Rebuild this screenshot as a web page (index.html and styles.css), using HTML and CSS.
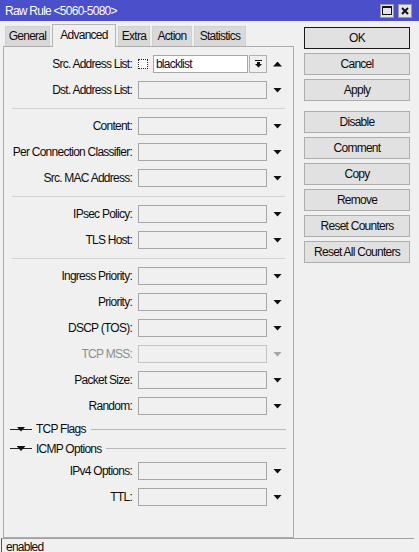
FILE: index.html
```html
<!DOCTYPE html>
<html lang="en">
<head>
    <meta charset="UTF-8">
    <title>Raw Rule &lt;5060-5080&gt;</title>
    <link rel="stylesheet" href="styles.css">
</head>
<body>
    <div class="titlebar">
        <span class="title">Raw Rule &lt;5060-5080&gt;</span>
        <div class="win-btns">
            <span class="win-btn"><span class="max-icon"></span></span>
            <span class="win-btn">
                <svg width="8" height="8" viewBox="0 0 8 8"><path d="M1 1L7 7M7 1L1 7" stroke="#111" stroke-width="2"/></svg>
            </span>
        </div>
    </div>

    <div class="main">
        <div class="left">
            <div class="tabs">
                <span class="tab tab-general">General</span>
                <span class="tab tab-advanced active">Advanced</span>
                <span class="tab tab-extra">Extra</span>
                <span class="tab tab-action">Action</span>
                <span class="tab tab-stats">Statistics</span>
            </div>

            <div class="panel">
                <div class="row">
                    <label>Src. Address List:</label>
                    <div class="combo">
                        <span class="check"></span>
                        <span class="text-input">blacklist</span>
                        <span class="drop-btn">
                            <svg width="7" height="8" viewBox="0 0 7 8"><rect x="0" y="0" width="7" height="1" fill="#111"/><rect x="2" y="2" width="3" height="2" fill="#111"/><path d="M0 4H7L3.5 7.5Z" fill="#111"/></svg>
                        </span>
                    </div>
                    <span class="arrow up"></span>
                </div>
                <div class="row">
                    <label>Dst. Address List:</label>
                    <span class="field"></span>
                    <span class="arrow"></span>
                </div>

                <div class="sep"></div>

                <div class="row">
                    <label>Content:</label>
                    <span class="field"></span>
                    <span class="arrow"></span>
                </div>
                <div class="row">
                    <label>Per Connection Classifier:</label>
                    <span class="field"></span>
                    <span class="arrow"></span>
                </div>
                <div class="row">
                    <label>Src. MAC Address:</label>
                    <span class="field"></span>
                    <span class="arrow"></span>
                </div>

                <div class="sep"></div>

                <div class="row">
                    <label>IPsec Policy:</label>
                    <span class="field"></span>
                    <span class="arrow"></span>
                </div>
                <div class="row">
                    <label>TLS Host:</label>
                    <span class="field"></span>
                    <span class="arrow"></span>
                </div>

                <div class="sep"></div>

                <div class="row">
                    <label>Ingress Priority:</label>
                    <span class="field"></span>
                    <span class="arrow"></span>
                </div>
                <div class="row">
                    <label>Priority:</label>
                    <span class="field"></span>
                    <span class="arrow"></span>
                </div>
                <div class="row">
                    <label>DSCP (TOS):</label>
                    <span class="field"></span>
                    <span class="arrow"></span>
                </div>
                <div class="row disabled">
                    <label>TCP MSS:</label>
                    <span class="field"></span>
                    <span class="arrow"></span>
                </div>
                <div class="row">
                    <label>Packet Size:</label>
                    <span class="field"></span>
                    <span class="arrow"></span>
                </div>
                <div class="row">
                    <label>Random:</label>
                    <span class="field"></span>
                    <span class="arrow"></span>
                </div>

                <div class="group group-tcp">
                    <span class="group-toggle"><span class="arrow"></span></span>
                    <span class="group-name">TCP Flags</span>
                    <span class="group-line"></span>
                </div>
                <div class="group">
                    <span class="group-toggle"><span class="arrow"></span></span>
                    <span class="group-name">ICMP Options</span>
                    <span class="group-line"></span>
                </div>

                <div class="row">
                    <label>IPv4 Options:</label>
                    <span class="field"></span>
                    <span class="arrow"></span>
                </div>
                <div class="row">
                    <label>TTL:</label>
                    <span class="field"></span>
                    <span class="arrow"></span>
                </div>
            </div>
        </div>

        <div class="buttons">
            <button class="btn default">OK</button>
            <button class="btn">Cancel</button>
            <button class="btn">Apply</button>
            <button class="btn btn-gap">Disable</button>
            <button class="btn">Comment</button>
            <button class="btn">Copy</button>
            <button class="btn">Remove</button>
            <button class="btn">Reset Counters</button>
            <button class="btn">Reset All Counters</button>
        </div>
    </div>

    <div class="statusbar">enabled</div>
</body>
</html>
```

FILE: styles.css
```css
* {
    margin: 0;
    padding: 0;
    box-sizing: border-box;
}

body {
    width: 419px;
    height: 552px;
    overflow: hidden;
    font-family: 'Liberation Sans', Arial, sans-serif;
    font-size: 12px;
    letter-spacing: -0.75px;
    color: #0d0d0d;
    background: #f0f0f0;
}

/* title bar */

.titlebar {
    height: 21px;
    background: #4b4fca;
    display: flex;
    align-items: center;
    justify-content: space-between;
    padding: 0 7px 0 5px;
}

.title {
    color: #fff;
    font-size: 12px;
}

.win-btns {
    display: flex;
    gap: 4px;
}

.win-btn {
    width: 14px;
    height: 14px;
    background: #e4e4e4;
    border: 1px solid #9a9a9a;
    display: flex;
    align-items: center;
    justify-content: center;
}

.max-icon {
    width: 10px;
    height: 9px;
    border: 1px solid #111;
    border-top-width: 2px;
}

/* layout */

.main {
    display: flex;
    height: 517px;
    padding-left: 3px;
}

.left {
    width: 291px;
    display: flex;
    flex-direction: column;
}

/* tabs */

.tabs {
    height: 25px;
    display: flex;
    align-items: flex-end;
    gap: 2px;
    padding-left: 2px;
}

.tab {
    height: 20px;
    line-height: 19px;
    text-align: center;
    background: #d9d9d9;
    border: 1px solid #d0d0d0;
    border-bottom: none;
}

.tab.active {
    position: relative;
    height: 23px;
    margin-bottom: -1px;
    line-height: 20px;
    background: #f0f0f0;
    border-color: #b4b4b4;
    z-index: 1;
}

.tab-general { width: 45px; }
.tab-advanced { width: 64px; }
.tab-extra { width: 32px; }
.tab-action { width: 40px; }
.tab-stats { width: 52px; }

/* panel */

.panel {
    height: 492px;
    border: 1px solid #adadad;
    padding-top: 4px;
}

.row {
    height: 26px;
    display: flex;
    align-items: center;
}

.row label {
    width: 128px;
    text-align: right;
    margin-right: 6px;
    white-space: nowrap;
}

.field {
    width: 129px;
    height: 18px;
    border: 1px solid #a7a7a7;
}

.arrow {
    width: 9px;
    height: 5px;
    margin-left: 6px;
    background: #111;
    clip-path: polygon(0 0, 100% 0, 50% 100%);
}

.arrow.up {
    clip-path: polygon(50% 0, 100% 100%, 0 100%);
}

.row.disabled label {
    color: #8d8d8d;
}

.row.disabled .field {
    border-color: #c4c4c4;
}

.row.disabled .arrow {
    background: #a5a5a5;
}

.combo {
    width: 129px;
    height: 18px;
    display: flex;
    align-items: center;
}

.check {
    width: 10px;
    height: 10px;
    border: 1px dotted #222;
    background: #fff;
    margin-right: 5px;
}

.text-input {
    width: 96px;
    height: 18px;
    line-height: 16px;
    padding-left: 2px;
    background: #fff;
    border: 1px solid #a7a7a7;
    color: #0a0a30;
}

.drop-btn {
    width: 18px;
    height: 18px;
    margin-left: 1px;
    border: 1px solid #b0b0b0;
    display: flex;
    align-items: center;
    justify-content: center;
}

.sep {
    height: 10px;
    margin: 0 8px;
    background: linear-gradient(#d2d2d2, #d2d2d2) 0 5px / 100% 1px no-repeat;
}

/* collapsible groups */

.group {
    height: 19px;
    display: flex;
    align-items: center;
    padding: 0 7px 0 6px;
}

.group-tcp {
    height: 20px;
}

.group-toggle {
    width: 22px;
    height: 1px;
    background: #222;
    display: flex;
    align-items: center;
    justify-content: center;
}

.group-toggle .arrow {
    margin: 0;
    height: 5px;
}

.group-name {
    margin: 0 5px 0 4px;
    white-space: nowrap;
}

.group-line {
    flex: 1;
    height: 1px;
    background: #b8b8b8;
}

/* buttons */

.buttons {
    width: 106px;
    margin-left: 10px;
    padding-top: 6px;
    display: flex;
    flex-direction: column;
    gap: 4px;
}

.btn {
    height: 22px;
    font-family: inherit;
    font-size: 12px;
    letter-spacing: -0.75px;
    color: #0d0d0d;
    background: #e1e1e1;
    border: 1px solid #adadad;
}

.btn.default {
    border-color: #1a1a1a;
}

.btn-gap {
    margin-top: 6px;
}

/* status bar */

.statusbar {
    height: 14px;
    margin: 0 5px 0 1px;
    padding: 2px 0 0 4px;
    border-top: 1px solid #a0a0a0;
    border-left: 1px solid #555;
    line-height: 13px;
}
```
